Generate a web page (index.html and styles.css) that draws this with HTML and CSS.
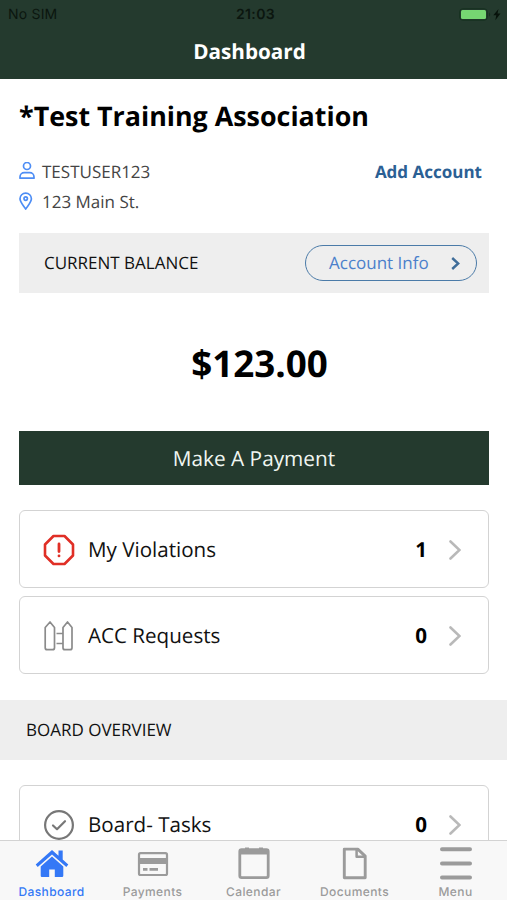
FILE: index.html
```html
<!DOCTYPE html>
<html lang="en">
<head>
<meta charset="utf-8">
<title>Dashboard</title>
<link rel="stylesheet" href="styles.css">
</head>
<body>
<div class="app">
  <header class="header">
    <div class="status">
      <span class="carrier">No SIM</span>
      <span class="clock">21:03</span>
      <svg class="battery" width="44" height="14" viewBox="0 0 44 14">
        <rect x=".7" y=".8" width="27.600" height="11.400" rx="3" fill="none" stroke="#15301f"/>
        <rect x="2" y="1.900" width="25" height="9.200" rx="1.500" fill="#76d672"/>
        <path d="M30 4.500v4c1.600-.8 1.600-3.200 0-4z" fill="#15301f"/>
        <path d="M39.500 1l-5.200 6.300h3l-1 4.900 5.200-6.600h-3z" fill="#07120b"/>
      </svg>
    </div>
    <h1 class="page-title">Dashboard</h1>
  </header>

  <main class="content">
    <section class="account">
      <h2 class="association">*Test Training Association</h2>
      <div class="details">
        <div>
          <div class="detail">
            <svg width="16" height="18" viewBox="0 0 16 18"><circle cx="8" cy="4" r="3.500"/><path d="M1 16.200v-1.300c0-2.500 2-4.200 4.200-4.200h5.600c2.200 0 4.200 1.700 4.200 4.200v1.300z"/></svg>
            <span>TESTUSER123</span>
          </div>
          <div class="detail">
            <svg width="16" height="18" viewBox="0 0 16 18"><path d="M6.700 17C4 13 1 10 1 6.800a5.700 5.700 0 0 1 11.400 0C12.400 10 9.400 13 6.700 17z"/><circle cx="6.700" cy="6.600" r="1.700"/></svg>
            <span>123 Main St.</span>
          </div>
        </div>
        <a class="add-account">Add Account</a>
      </div>
    </section>

    <section class="balance">
      <span class="balance-label">CURRENT BALANCE</span>
      <a class="info-button">
        <span>Account Info</span>
        <svg width="9" height="14" viewBox="0 0 9 14"><path d="M1.200 2l6 5.500-6 5.500"/></svg>
      </a>
    </section>
    <div class="amount">$123.00</div>
    <a class="pay">Make A Payment</a>

    <div class="cards">
      <div class="card">
        <svg class="icon" width="32" height="32" viewBox="0 0 32 32" fill="none" stroke="#e02f26" stroke-width="2.600" stroke-linejoin="round" stroke-linecap="round"><path d="M10.500 2h11L30 10.500v11L21.500 30h-11L2 21.500v-11z"/><path d="M16 10v7.500M16 21.800v.1" stroke-width="2.800"/></svg>
        <span class="label">My Violations</span><span class="count">1</span>
        <svg class="chevron" width="12" height="20" viewBox="0 0 12 20"><path d="M1.500 1.500l9 8.500-9 8.500"/></svg>
      </div>
      <div class="card">
        <svg class="icon" width="32" height="32" viewBox="0 0 32 32" fill="none" stroke="#8b8b8b" stroke-width="1.700" stroke-linejoin="round"><path d="M2.200 7.500L7 2l4.500 5.500v20.200q0 2-2 2H4.200q-2 0-2-2zM20 7.500L24.500 2 29 7.500v20.200q0 2-2 2h-5q-2 0-2-2zM13.500 13.500H20M13.500 23.500H20"/></svg>
        <span class="label">ACC Requests</span><span class="count">0</span>
        <svg class="chevron" width="12" height="20" viewBox="0 0 12 20"><path d="M1.500 1.500l9 8.500-9 8.500"/></svg>
      </div>
    </div>

    <h3 class="section-title">BOARD OVERVIEW</h3>
    <div class="cards board">
      <div class="card">
        <svg class="icon" width="32" height="32" viewBox="0 0 32 32" fill="none" stroke="#777" stroke-width="2.200" stroke-linejoin="round" stroke-linecap="round"><circle cx="16" cy="16" r="13.900"/><path d="M10 16.500l4 3.700 8-8"/></svg>
        <span class="label">Board- Tasks</span><span class="count">0</span>
        <svg class="chevron" width="12" height="20" viewBox="0 0 12 20"><path d="M1.500 1.500l9 8.500-9 8.500"/></svg>
      </div>
    </div>
  </main>

  <nav class="tabs">
    <a class="tab active">
      <svg width="34" height="34" viewBox="0 0 34 34" fill="currentColor"><path d="M17 4L23.500 9.800V4.500h4.200v9l5.600 5-2 2.500L17 8.400 2.700 21l-2-2.500z"/><path d="M17 10.600l11.300 9.800V29.800q0 1.200-1.200 1.200h-7.300v-7.600h-5.600v7.600H6.900q-1.200 0-1.200-1.200v-9.400z"/></svg>
      <span>Dashboard</span>
    </a>
    <a class="tab">
      <svg width="34" height="34" viewBox="0 0 34 34"><rect x="3" y="7.200" width="28" height="21.800" rx="1.500" fill="none" stroke="currentColor" stroke-width="2.200"/><path d="M2 12h30v6H2zM7 21.900h4.500v2.800H7zM13.500 21.900h8.500v2.800h-8.500z" fill="currentColor"/></svg>
      <span>Payments</span>
    </a>
    <a class="tab">
      <svg width="34" height="34" viewBox="0 0 34 34"><rect x="2.800" y="3.600" width="28.400" height="28" rx="1.800" fill="none" stroke="currentColor" stroke-width="2.800"/><path d="M2.500 3h29v5.500h-29zM8 1.500h4v2H8zM22 1.500h4v2h-4z" fill="currentColor"/></svg>
      <span>Calendar</span>
    </a>
    <a class="tab">
      <svg width="34" height="34" viewBox="0 0 34 34" fill="none" stroke="currentColor" stroke-width="2.900" stroke-linejoin="round"><path d="M6.300 3.100h13.500l7.400 7v21.600h-20.900z"/><path d="M18.600 3.500v7.300h8.400" stroke-width="2.500"/></svg>
      <span>Documents</span>
    </a>
    <a class="tab">
      <svg width="34" height="34" viewBox="0 0 34 34" stroke="currentColor" stroke-width="4" stroke-linecap="round"><path d="M3 3.300h28M3 17.600h28M3 31.600h28"/></svg>
      <span>Menu</span>
    </a>
  </nav>
</div>
</body>
</html>
```
FILE: styles.css
```css
* { box-sizing: border-box; }
body { margin: 0; font-family: "Open Sans", sans-serif; color: #000; background: #fff; text-rendering: geometricPrecision; }
h1, h2, h3 { margin: 0; }
.app { height: 900px; display: flex; flex-direction: column; overflow: hidden; }
.header { height: 79px; flex: none; background: #243a2e; }
.status { height: 28px; padding: 0 4px 0 8px; display: grid; grid-template-columns: 1fr auto 1fr; align-items: center; font: 14px/28px Inter, sans-serif; color: #0b160f; }
.carrier { letter-spacing: .2px; padding-top: 1px; }
.clock { font-weight: 600; letter-spacing: .4px; padding-top: 1px; }
.battery { justify-self: end; }
.page-title { font-size: 20.7px; line-height: 28px; margin-top: 10px; padding-right: 8px; font-weight: 700; text-align: center; color: #fff; }
.content { flex: 1; min-height: 0; overflow: hidden; }
.account { height: 154px; padding: 19px 25px 0 19px; }
.association { font-size: 26.85px; line-height: 36px; font-weight: 700; white-space: nowrap; }
.details { margin-top: 22px; display: flex; justify-content: space-between; align-items: flex-start; }
.detail { height: 30px; display: flex; align-items: center; gap: 7px; font-size: 17px; color: #444; }
.detail svg { fill: none; stroke: #4d8df5; stroke-width: 1.7; stroke-linejoin: round; }
.add-account { font-size: 17px; line-height: 30px; padding-top: 1px; font-weight: 700; color: #2b6094; }
.balance { height: 60px; margin: 0 18px 0 19px; padding: 0 12px 0 25px; display: flex; align-items: center; justify-content: space-between; background: #eee; }
.balance-label { font-size: 17px; margin-top: -1px; color: #111; }
.info-button { width: 172px; height: 36px; border: 1.5px solid #4b7ba8; border-radius: 18px; display: flex; align-items: center; justify-content: space-between; padding: 0 16px 0 23px; font-size: 17px; color: #4b80cb; }
.info-button span { margin-top: -1px; }
.info-button svg { fill: none; stroke: #3f6d99; stroke-width: 2.4; }
.amount { height: 138px; line-height: 140px; font-size: 36.8px; font-weight: 700; text-align: center; padding-left: 12px; }
.pay { display: block; height: 54px; margin: 0 18px 0 19px; background: #243a2e; color: #f0f6f1; font-size: 20.8px; line-height: 56px; text-align: center; }
.cards { margin: 25px 18px 0 19px; display: grid; gap: 8px; }
.card { height: 78px; border: 1.5px solid #d3d3d3; border-radius: 6px; display: flex; align-items: center; padding: 1px 27px 0 23px; font-size: 20.6px; color: #111; background: #fff; }
.label { margin-left: 13px; flex: 1; }
.count { font-weight: 700; color: #000; margin-right: 22px; }
.chevron { fill: none; stroke: #b9b9b9; stroke-width: 2.6; stroke-linecap: round; }
.section-title { height: 60px; margin-top: 26px; padding-left: 26px; line-height: 60px; font-size: 17px; font-weight: 400; color: #111; background: #eee; }
.tabs { flex: none; height: 60px; border-top: 1px solid #d3d3d3; background: #f8f8f8; display: grid; grid-template-columns: repeat(5, 101px); justify-content: center; }
.tab { display: flex; flex-direction: column; align-items: center; padding-top: 5px; font: 500 12px/16px Inter, sans-serif; letter-spacing: .4px; color: #9b9b9b; }
.tab span { margin-top: 4px; }
.tab.active { color: #3478f6; }
```
